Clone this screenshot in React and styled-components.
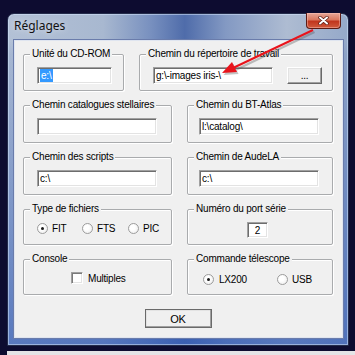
import React from "react";
import styled, { createGlobalStyle } from "styled-components";

const GlobalStyle = createGlobalStyle`
  html, body {
    margin: 0;
    padding: 0;
    background: #0d0c30;
  }
  body {
    width: 355px;
    height: 355px;
    overflow: hidden;
  }
`;

const Page = styled.div`
  position: relative;
  width: 355px;
  height: 355px;
  box-sizing: border-box;
  padding: 13px 0 0 7px;
  display: flex;
  flex-direction: column;
  background: #0d0c30;
`;

const Window = styled.div`
  width: 342px;
  height: 333px;
  box-sizing: border-box;
  border: 1px solid #232b4a;
  border-radius: 7px 7px 0 0;
  padding: 0 5px 7px 6px;
  display: flex;
  flex-direction: column;
  box-shadow: inset 0 0 0 1px rgba(210, 225, 250, 0.55);
  background:
    linear-gradient(180deg, transparent 0, transparent 27px, rgba(60, 95, 175, 0.1) 40px, rgba(50, 90, 180, 0.7) 100%),
    linear-gradient(90deg, #b3c1d6 0%, #a8b8d0 28%, #7890bf 42%, #4f6caa 52%, #8399c3 64%, #aebcd2 82%, #95a9c9 100%);
`;

const BottomStrip = styled.div`
  margin-top: 5px;
  height: 4px;
  background: #e4e4e6;
`;

const TitleBar = styled.div`
  height: 26px;
  display: flex;
  justify-content: space-between;
  align-items: flex-start;
`;

const Title = styled.span`
  font-family: "Noto Sans", "Open Sans", sans-serif;
  font-size: 12px;
  line-height: 15px;
  padding-top: 4px;
  color: #111;
  text-shadow: 0 0 6px rgba(255, 255, 255, 0.7);
`;

const CloseButton = styled.div`
  width: 35px;
  height: 16px;
  margin: -1px 2px 0 0;
  box-sizing: border-box;
  border: 1px solid #5b1b14;
  border-top: none;
  border-radius: 0 0 4px 4px;
  display: flex;
  align-items: center;
  justify-content: center;
  background: linear-gradient(180deg, #e6a798 0%, #d9775f 45%, #c1351d 55%, #cf5a3c 100%);
  box-shadow: inset 0 0 0 1px rgba(255, 200, 190, 0.45);
`;

const Client = styled.div`
  flex: 1;
  box-sizing: border-box;
  background: #f0f0f0;
  border: 1px solid #dfe5f0;
  box-shadow: 0 0 0 1px #6a7cab;
  padding: 7px 9px 0 8px;
  display: flex;
  flex-direction: column;
  font-family: "Liberation Sans", Arial, sans-serif;
  font-size: 10px;
  letter-spacing: -0.2px;
  color: #000;
`;

const TopRow = styled.div`
  display: flex;
  gap: 15px;
`;

const Grid = styled.div`
  margin-top: 8px;
  display: grid;
  grid-template-columns: 149px 146px;
  grid-template-rows: 44px 44px 42px 42px;
  column-gap: 15px;
  row-gap: 8px;
`;

const GroupBox = styled.fieldset`
  margin: 0;
  min-width: 0;
  box-sizing: border-box;
  width: ${({ $w }) => ($w ? `${$w}px` : "auto")};
  height: ${({ $h }) => ($h ? `${$h}px` : "100%")};
  padding: 0 0 0 6px;
  border: 1px solid #a9abad;
  border-radius: 2px;
  box-shadow: inset 1px 1px 0 #fff, 1px 1px 0 #fff;
`;

const Legend = styled.legend`
  padding: 0 2px;
  margin: 0;
  line-height: 12px;
  background: #f0f0f0;
  white-space: nowrap;
`;

const Body = styled.div`
  display: flex;
  align-items: center;
  gap: ${({ $gap }) => $gap ?? 0}px;
  padding: ${({ $pt }) => $pt ?? 7}px 0 0 ${({ $pl }) => $pl ?? 7}px;
`;

const TextField = styled.div`
  width: ${({ $w }) => $w}px;
  height: ${({ $h }) => $h ?? 17}px;
  box-sizing: border-box;
  background: #fff;
  border: 1px solid;
  border-color: #a0a0a0 #fff #fff #a0a0a0;
  box-shadow: inset 1px 1px 0 #6d6d6d, inset -1px -1px 0 #e3e3e3;
  padding: 0 2px;
  display: flex;
  align-items: center;
  justify-content: ${({ $center }) => ($center ? "center" : "flex-start")};
  white-space: nowrap;
  overflow: hidden;
`;

const Selected = styled.span`
  background: #3399ff;
  color: #fff;
  padding: 0 1px;
  line-height: 13px;
`;

const PushButton = styled.div`
  width: ${({ $w }) => $w}px;
  height: ${({ $h }) => $h}px;
  box-sizing: border-box;
  background: #f0f0f0;
  border: 1px solid;
  border-color: #fff #696969 #696969 #fff;
  box-shadow: inset -1px -1px 0 #a0a0a0, inset 1px 1px 0 #e3e3e3;
  display: flex;
  align-items: center;
  justify-content: center;
  font-size: ${({ $fs }) => $fs ?? 10}px;
`;

const OkButton = styled(PushButton)`
  align-self: center;
  margin-top: 14px;
  outline: 1px solid #6a6a6a;
  outline-offset: -1px;
  border-color: #fff #404040 #404040 #fff;
`;

const Choice = styled.div`
  width: ${({ $w }) => ($w ? `${$w}px` : "auto")};
  display: flex;
  align-items: center;
  gap: ${({ $gap }) => $gap ?? 4}px;
`;

const Radio = styled.span`
  width: 11px;
  height: 11px;
  box-sizing: border-box;
  border-radius: 50%;
  border: 1px solid #9c9c9c;
  background: radial-gradient(circle at 40% 40%, #fff 30%, #e8e8e8 100%);
  display: flex;
  align-items: center;
  justify-content: center;
  &::after {
    content: "";
    width: 3px;
    height: 3px;
    border-radius: 50%;
    background: ${({ $on }) => ($on ? "#1a1a1a" : "transparent")};
  }
`;

const CheckBox = styled.span`
  width: 12px;
  height: 12px;
  box-sizing: border-box;
  background: #fff;
  border: 1px solid;
  border-color: #a0a0a0 #fff #fff #a0a0a0;
  box-shadow: inset 1px 1px 0 #7a7a7a, inset -1px -1px 0 #e3e3e3;
`;

const Overlay = styled.svg`
  position: absolute;
  left: 0;
  top: 0;
  width: 355px;
  height: 355px;
  pointer-events: none;
`;

function CloseGlyph() {
  return (
    <svg width="11" height="9" viewBox="0 0 11 9">
      <path d="M2 1.5 L9 7.5 M9 1.5 L2 7.5" stroke="#5a1a12" strokeWidth="3.4" strokeLinecap="round" />
      <path d="M2 1.5 L9 7.5 M9 1.5 L2 7.5" stroke="#fff" strokeWidth="2" strokeLinecap="round" />
    </svg>
  );
}

function RedArrow() {
  return (
    <Overlay viewBox="0 0 355 355">
      <g opacity="0.35" transform="translate(1.5 2)">
        <line x1="313" y1="30" x2="234" y2="68" stroke="#555" strokeWidth="2.4" />
        <polygon points="222,73 237,72 232,62" fill="#555" />
      </g>
      <line x1="313" y1="30" x2="233" y2="68" stroke="#e8141c" strokeWidth="2" />
      <polygon points="222,73 237,72 232,62" fill="#e8141c" />
    </Overlay>
  );
}

export default function App() {
  return (
    <>
      <GlobalStyle />
      <Page>
        <Window>
          <TitleBar>
            <Title>Réglages</Title>
            <CloseButton>
              <CloseGlyph />
            </CloseButton>
          </TitleBar>
          <Client>
            <TopRow>
              <GroupBox $w={101} $h={43}>
                <Legend>Unité du CD-ROM</Legend>
                <Body>
                  <TextField $w={75}>
                    <Selected>e:\</Selected>
                  </TextField>
                </Body>
              </GroupBox>
              <GroupBox $w={194} $h={43}>
                <Legend>Chemin du répertoire de travail</Legend>
                <Body $gap={14}>
                  <TextField $w={120}>g:\-images iris-\</TextField>
                  <PushButton $w={35} $h={17}>...</PushButton>
                </Body>
              </GroupBox>
            </TopRow>
            <Grid>
              <GroupBox>
                <Legend>Chemin catalogues stellaires</Legend>
                <Body>
                  <TextField $w={120} />
                </Body>
              </GroupBox>
              <GroupBox>
                <Legend>Chemin du BT-Atlas</Legend>
                <Body $pl={5}>
                  <TextField $w={120}>l:\catalog\</TextField>
                </Body>
              </GroupBox>
              <GroupBox>
                <Legend>Chemin des scripts</Legend>
                <Body>
                  <TextField $w={120}>c:\</TextField>
                </Body>
              </GroupBox>
              <GroupBox>
                <Legend>Chemin de AudeLA</Legend>
                <Body $pl={5}>
                  <TextField $w={120}>c:\</TextField>
                </Body>
              </GroupBox>
              <GroupBox>
                <Legend>Type de fichiers</Legend>
                <Body $pt={8}>
                  <Choice $w={45}>
                    <Radio $on />
                    FIT
                  </Choice>
                  <Choice $w={46}>
                    <Radio />
                    FTS
                  </Choice>
                  <Choice>
                    <Radio />
                    PIC
                  </Choice>
                </Body>
              </GroupBox>
              <GroupBox>
                <Legend>Numéro du port série</Legend>
                <Body $pl={53}>
                  <TextField $w={21} $h={16} $center>
                    2
                  </TextField>
                </Body>
              </GroupBox>
              <GroupBox>
                <Legend>Console</Legend>
                <Body $pl={41} $pt={7}>
                  <Choice $gap={5}>
                    <CheckBox />
                    Multiples
                  </Choice>
                </Body>
              </GroupBox>
              <GroupBox>
                <Legend>Commande télescope</Legend>
                <Body $pl={9} $pt={9}>
                  <Choice $w={74} $gap={5}>
                    <Radio $on />
                    LX200
                  </Choice>
                  <Choice $gap={4}>
                    <Radio />
                    USB
                  </Choice>
                </Body>
              </GroupBox>
            </Grid>
            <OkButton $w={67} $h={19} $fs={11}>
              OK
            </OkButton>
          </Client>
        </Window>
        <BottomStrip />
        <RedArrow />
      </Page>
    </>
  );
}
